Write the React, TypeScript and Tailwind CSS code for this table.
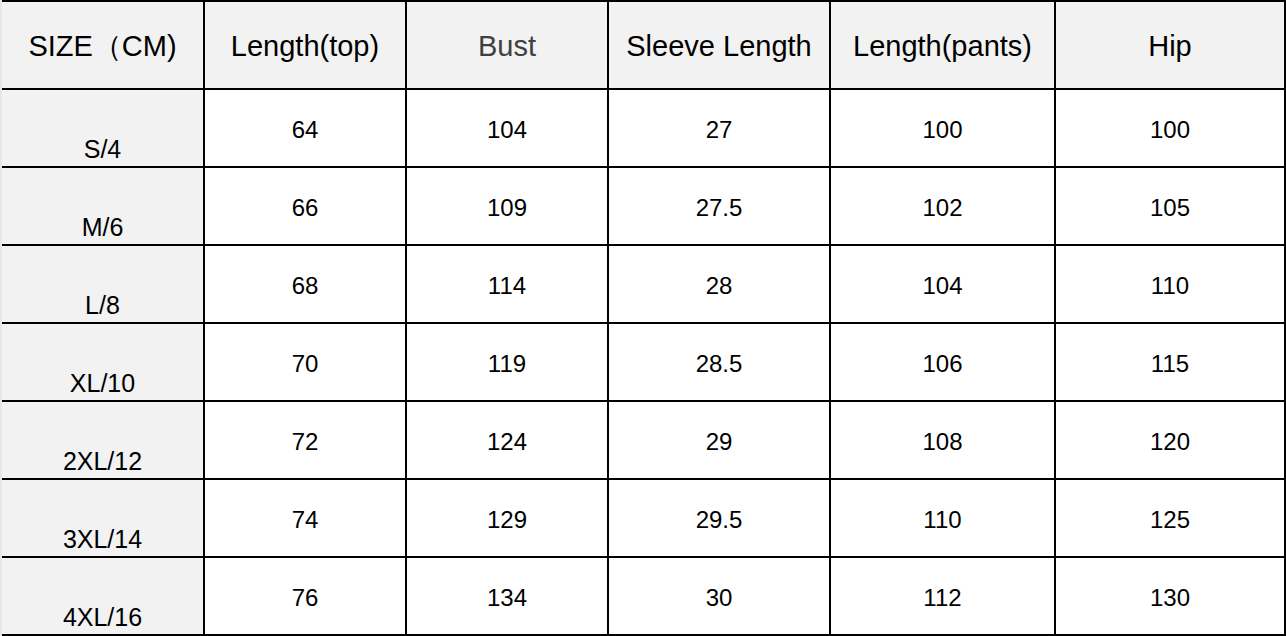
import React from 'react';

const headers = ['SIZE（CM)', 'Length(top)', 'Bust', 'Sleeve Length', 'Length(pants)', 'Hip'];

const rows: string[][] = [
  ['S/4', '64', '104', '27', '100', '100'],
  ['M/6', '66', '109', '27.5', '102', '105'],
  ['L/8', '68', '114', '28', '104', '110'],
  ['XL/10', '70', '119', '28.5', '106', '115'],
  ['2XL/12', '72', '124', '29', '108', '120'],
  ['3XL/14', '74', '129', '29.5', '110', '125'],
  ['4XL/16', '76', '134', '30', '112', '130'],
];

export default function App() {
  return (
    <div className="w-[1286px] h-[636px] bg-white flex" style={{ fontFamily: '"Liberation Sans", Arial, sans-serif' }}>
      {/* left edge strip */}
      <div className="w-[2px] h-full bg-[#e6e6ee]" />
      <div className="flex-1 bg-black pt-[2px] pr-[2px] pb-[2px] grid grid-cols-[201px_200px_200px_220px_223px_228px] grid-rows-[86px_repeat(7,76px)] gap-[2px]">
        {headers.map((h, i) => (
          <div
            key={h}
            className={`bg-[#f2f2f2] flex items-center justify-center text-[29px] leading-none pt-[2px] ${i === 2 ? 'text-[#404040]' : 'text-black'}`}
          >
            {h}
          </div>
        ))}
        {rows.map((r) =>
          r.map((c, j) =>
            j === 0 ? (
              <div key={r[0] + j} className="bg-[#f2f2f2] flex items-end justify-center pb-[4px] text-[25px] leading-none text-black">
                {c}
              </div>
            ) : (
              <div key={r[0] + j} className="bg-white flex items-center justify-center pt-[4px] text-[24px] leading-none text-black">
                {c}
              </div>
            )
          )
        )}
      </div>
    </div>
  );
}
